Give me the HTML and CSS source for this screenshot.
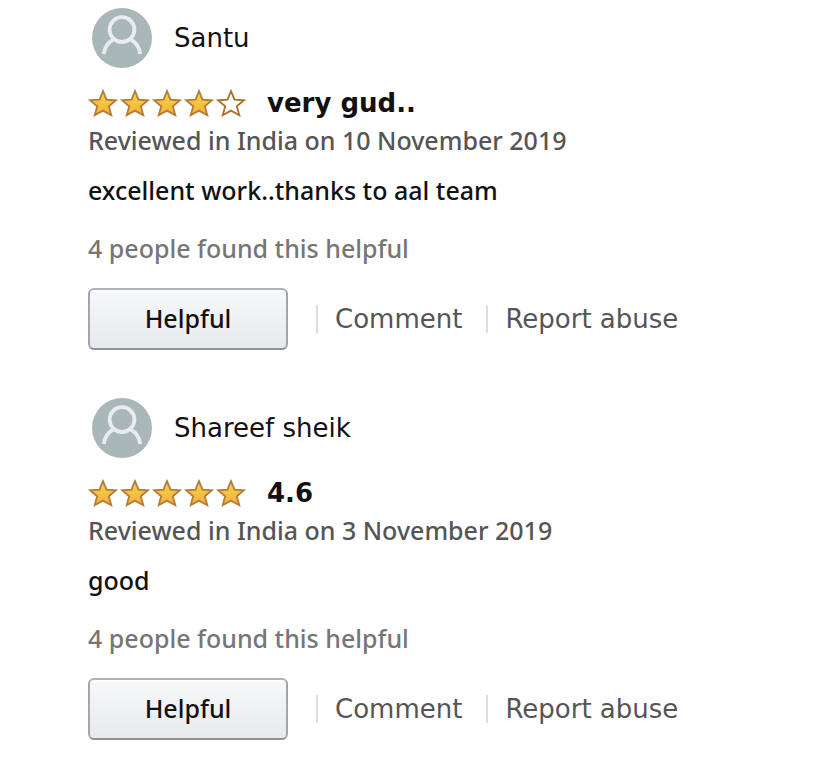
FILE: index.html
```
<!DOCTYPE html>
<html lang="en">
<head>
<meta charset="utf-8">
<meta name="viewport" content="width=device-width, initial-scale=1">
<title>Customer reviews</title>
<link rel="stylesheet" href="styles.css">
</head>
<body>
<svg class="defs" aria-hidden="true">
  <defs>
    <linearGradient id="gold" x1="0" y1="0" x2="0" y2="1">
      <stop offset="0" stop-color="#fbd24a"/>
      <stop offset="1" stop-color="#f4b03a"/>
    </linearGradient>
    <path id="star" d="M15 4.2 L18.5 12.7 L27.9 13.3 L20.8 19.3 L23.3 28.2 L15 23.6 L6.7 28.2 L9.2 19.3 L2.1 13.3 L11.5 12.7 Z"/>
    <g id="four">
      <use href="#star"/><use href="#star" x="32"/><use href="#star" x="64"/><use href="#star" x="96"/>
    </g>
    <g id="person">
      <circle cx="30" cy="30" r="30" fill="#aab7b8"/>
      <g fill="none" stroke="#e8ecf2" stroke-width="3.8">
        <circle cx="30" cy="21.6" r="12.4"/>
        <path d="M11.8 46 C12.6 39.5 16 34.4 21.4 31.4 M48.2 46 C47.4 39.5 44 34.4 38.6 31.4"/>
      </g>
    </g>
  </defs>
</svg>
<main class="reviews">
  <article class="review">
    <header class="profile">
      <svg class="avatar" viewBox="0 0 60 60" aria-hidden="true"><use href="#person"/></svg>
      <span class="name">Santu</span>
    </header>
    <div class="rating">
      <svg class="stars" viewBox="0 0 160 32" role="img" aria-label="4 out of 5 stars">
        <use class="full" href="#four"/><use class="empty" href="#star" x="128"/>
      </svg>
      <h2 class="title">very gud..</h2>
    </div>
    <p class="date">Reviewed in India on 10 November 2019</p>
    <p class="body">excellent work..thanks to aal team</p>
    <p class="votes">4 people found this helpful</p>
    <div class="actions">
      <button class="helpful" type="button">Helpful</button>
      <a class="action" href="#comment">Comment</a>
      <a class="action" href="#report">Report abuse</a>
    </div>
  </article>
  <article class="review">
    <header class="profile">
      <svg class="avatar" viewBox="0 0 60 60" aria-hidden="true"><use href="#person"/></svg>
      <span class="name">Shareef sheik</span>
    </header>
    <div class="rating">
      <svg class="stars" viewBox="0 0 160 32" role="img" aria-label="5 out of 5 stars">
        <use class="full" href="#four"/><use class="full" href="#star" x="128"/>
      </svg>
      <h2 class="title">4.6</h2>
    </div>
    <p class="date">Reviewed in India on 3 November 2019</p>
    <p class="body">good</p>
    <p class="votes">4 people found this helpful</p>
    <div class="actions">
      <button class="helpful" type="button">Helpful</button>
      <a class="action" href="#comment">Comment</a>
      <a class="action" href="#report">Report abuse</a>
    </div>
  </article>
</main>
</body>
</html>
```
FILE: styles.css
```
* {
  box-sizing: border-box;
}

body {
  margin: 0;
  background: #fff;
  color: #111;
  font-family: "Noto Sans", "Open Sans", sans-serif;
  font-size: 25px;
  font-weight: 500;
  line-height: 36px;
}

.defs {
  position: absolute;
  width: 0;
  height: 0;
}

.reviews {
  display: flex;
  flex-direction: column;
  gap: 48px;
  padding: 8px 88px 40px;
}

.profile {
  display: flex;
  align-items: center;
  gap: 22px;
  padding-left: 4px;
  margin-bottom: 16px;
}

.avatar {
  width: 60px;
  height: 60px;
}

.name,
.title,
.action {
  font-family: "DejaVu Sans", Verdana, sans-serif;
  font-size: 26px;
  font-weight: 400;
}

.rating {
  display: flex;
  align-items: center;
  gap: 19px;
}

.stars {
  width: 160px;
  height: 32px;
}

.full,
.empty {
  stroke: #b07e3a;
  stroke-width: 1.8;
}

.full {
  fill: url(#gold);
}

.empty {
  fill: #fff;
  stroke: #a5722a;
}

.title {
  margin: 0;
  font-weight: 700;
  line-height: 38px;
}

.date,
.body,
.votes {
  margin: 0;
}

.date {
  color: #555;
}

.body {
  margin-top: 14px;
}

.votes {
  margin-top: 22px;
  color: #767676;
}

.actions {
  display: flex;
  align-items: center;
  margin-top: 22px;
}

.helpful {
  width: 200px;
  height: 62px;
  margin-right: 28px;
  padding: 0 0 2px;
  border: 2px solid;
  border-color: #adb1b8 #a2a6ac #8d9096;
  border-radius: 6px;
  background: linear-gradient(#f7f8fa, #e7e9ec);
  box-shadow: inset 0 2px 0 rgba(255, 255, 255, 0.6);
  color: #111;
  font: inherit;
}

.action {
  padding: 0 24px 0 17px;
  border-left: 2px solid #ddd;
  color: #555;
  line-height: 28px;
  text-decoration: none;
}
```
